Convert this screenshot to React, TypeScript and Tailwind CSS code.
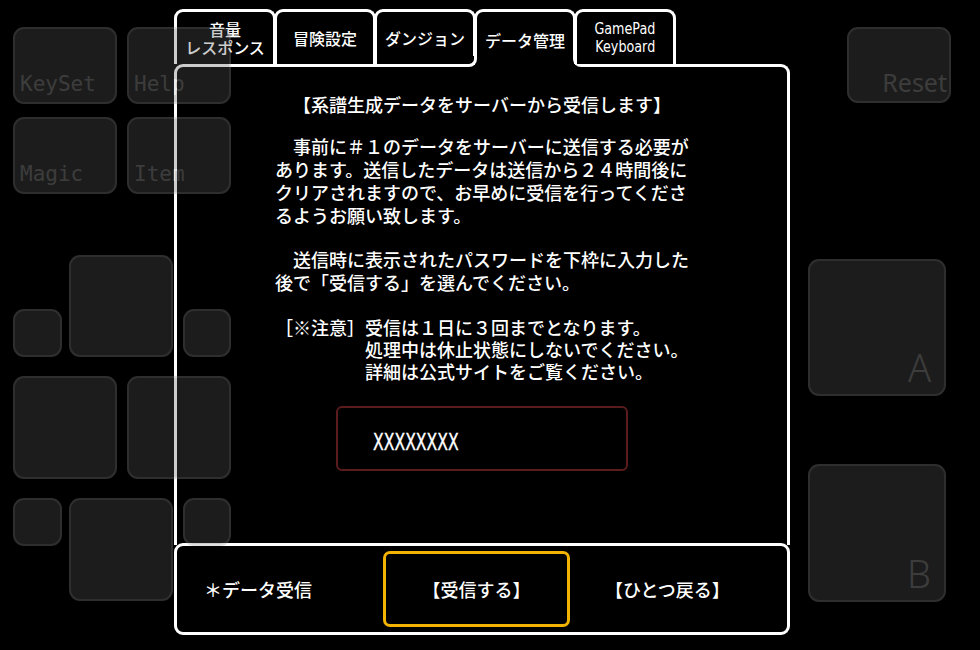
import React from "react";

const jp = "font-['Noto_Sans_CJK_JP','Noto_Sans',sans-serif]";

type Tab = { lines: string[]; active?: boolean; latin?: boolean };

const tabs: Tab[] = [
  { lines: ["音量", "レスポンス"] },
  { lines: ["冒険設定"] },
  { lines: ["ダンジョン"] },
  { lines: ["データ管理"], active: true },
  { lines: ["GamePad", "Keyboard"], latin: true },
];

// virtual pad keys drawn over the menu, see-through
const padKeys = [
  { pos: "left-[13px] top-[27px] w-[104px] h-[77px]", label: "KeySet", style: "mono" },
  { pos: "left-[127px] top-[27px] w-[104px] h-[77px]", label: "Help", style: "mono" },
  { pos: "left-[13px] top-[117px] w-[104px] h-[77px]", label: "Magic", style: "mono" },
  { pos: "left-[127px] top-[117px] w-[104px] h-[77px]", label: "Item", style: "mono" },
  { pos: "left-[69px] top-[255px] w-[104px] h-[102px]" },
  { pos: "left-[13px] top-[309px] w-[49px] h-[48px]" },
  { pos: "left-[183px] top-[309px] w-[48px] h-[48px]" },
  { pos: "left-[13px] top-[376px] w-[104px] h-[103px]" },
  { pos: "left-[127px] top-[376px] w-[104px] h-[103px]" },
  { pos: "left-[13px] top-[498px] w-[49px] h-[48px]" },
  { pos: "left-[69px] top-[498px] w-[104px] h-[103px]" },
  { pos: "left-[183px] top-[498px] w-[48px] h-[48px]" },
  { pos: "left-[847px] top-[27px] w-[104px] h-[76px]", label: "Reset", style: "reset" },
  { pos: "left-[808px] top-[259px] w-[138px] h-[137px]", label: "A", style: "big" },
  { pos: "left-[808px] top-[464px] w-[138px] h-[138px]", label: "B", style: "big" },
];

const labelClass: Record<string, string> = {
  mono: "left-[5px] bottom-[7px] text-[21px] font-['DejaVu_Sans_Mono',monospace] leading-none",
  reset: "right-[2px] bottom-[6px] text-[25px] font-['Noto_Sans',sans-serif] leading-none",
  big: "right-[13px] bottom-[8px] text-[38px] font-['Noto_Sans',sans-serif] font-light leading-none",
};

const Line = ({ children }: { children: React.ReactNode }) => (
  <div className="whitespace-pre">{children}</div>
);

export default function App() {
  return (
    <div className={`relative w-[980px] h-[650px] bg-black overflow-hidden text-white ${jp}`}>
      <div className="flex flex-col pl-[174px] pt-[9px] w-[790px]">
        {/* tabs */}
        <div className="flex items-start h-[55px] relative z-10">
          {tabs.map((t, i) => (
            <div
              key={i}
              className={`relative flex flex-col items-center justify-center w-[102px] border-[3px] border-b-0 border-white rounded-t-[9px] bg-black ${
                i > 0 ? "-ml-[2px]" : ""
              } ${t.active ? "h-[58px] pt-[1px]" : "h-[55px]"} ${
                t.latin
                  ? "font-['DejaVu_Sans',sans-serif] text-[15px] leading-[18px]"
                  : "text-[16px] leading-[18px] font-medium"
              }`}
            >
              {t.lines.map((l) => (
                <span key={l} className={t.latin ? "inline-block scale-x-[0.85]" : ""}>
                  {l}
                </span>
              ))}
              {t.active && (
                <>
                  <span className="absolute -left-[11px] bottom-0 w-[11px] h-[11px] bg-black">
                    <span className="absolute inset-0 border-b-[3px] border-r-[3px] border-white rounded-br-[8px]" />
                  </span>
                  <span className="absolute -right-[11px] bottom-0 w-[11px] h-[11px] bg-black">
                    <span className="absolute inset-0 border-b-[3px] border-l-[3px] border-white rounded-bl-[8px]" />
                  </span>
                </>
              )}
            </div>
          ))}
        </div>

        {/* main panel */}
        <div className="h-[481px] border-[3px] border-b-0 border-white rounded-t-[9px] bg-black">
          <div className="w-[414px] mx-auto pt-[26px] text-[18px] leading-[23px] font-medium">
            <div className="text-center">【系譜生成データをサーバーから受信します】</div>
            <div className="mt-[19px]">
              <Line>　事前に＃１のデータをサーバーに送信する必要が</Line>
              <Line>あります。送信したデータは送信から２４時間後に</Line>
              <Line>クリアされますので、お早めに受信を行ってくださ</Line>
              <Line>るようお願い致します。</Line>
            </div>
            <div className="mt-[21px]">
              <Line>　送信時に表示されたパスワードを下枠に入力した</Line>
              <Line>後で「受信する」を選んでください。</Line>
            </div>
            <div className="mt-[22px] leading-[22px]">
              <Line>［※注意］受信は１日に３回までとなります。</Line>
              <Line>　　　　　処理中は休止状態にしないでください。</Line>
              <Line>　　　　　詳細は公式サイトをご覧ください。</Line>
            </div>
          </div>
          <div className="mt-[24px] mx-auto w-[292px] h-[65px] border-2 border-[#5a1c1c] rounded-[6px] flex items-center pl-[35px] pt-[8px]">
            <span className="inline-block origin-left scale-x-[0.68] text-[23px] font-medium font-['DejaVu_Sans',sans-serif] [-webkit-text-stroke:0.4px_white]">
              XXXXXXXX
            </span>
          </div>
        </div>

        {/* command bar */}
        <div className="h-[92px] -mt-[2px] border-[3px] border-white rounded-[9px] bg-black flex items-center pl-[27px] text-[18px] font-medium">
          <span className="w-[179px]">＊データ受信</span>
          <div className="w-[187px] h-[76px] border-[3px] border-[#f2b400] rounded-[7px] flex items-center justify-center">
            【受信する】
          </div>
          <span className="ml-[35px]">【ひとつ戻る】</span>
        </div>
      </div>

      {/* on-screen pad */}
      {padKeys.map((k, i) => (
        <div
          key={i}
          className={`absolute z-20 ${k.pos} rounded-[11px] bg-[#5c5c5c] border-2 border-[#9a9a9a] opacity-30`}
        >
          {k.label && k.style && (
            <span className={`absolute text-[#c8c8c8] ${labelClass[k.style]}`}>{k.label}</span>
          )}
        </div>
      ))}
    </div>
  );
}
